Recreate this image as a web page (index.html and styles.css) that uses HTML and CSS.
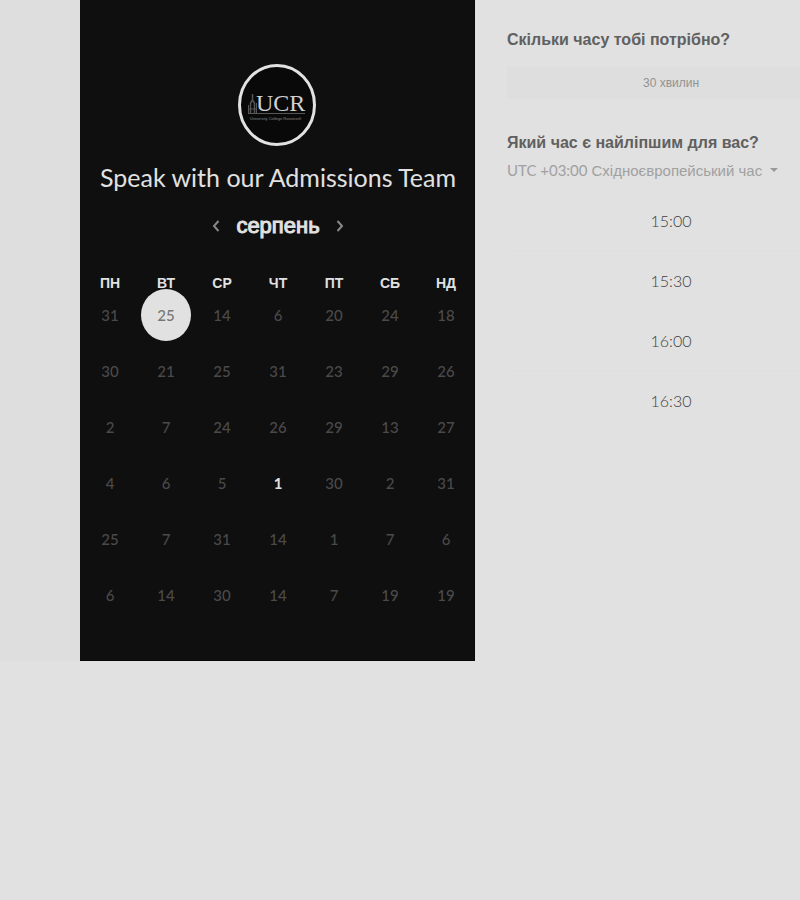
FILE: index.html
```html
<!DOCTYPE html>
<html lang="uk">
<head>
<meta charset="utf-8">
<meta name="viewport" content="width=device-width, initial-scale=1">
<title>Speak with our Admissions Team</title>
<link rel="stylesheet" href="styles.css">
</head>
<body>
<main class="booking">
  <section class="calendar">
    <svg class="logo" viewBox="0 0 80 82" role="img" aria-label="UCR">
      <ellipse cx="39" cy="41" rx="37.500" ry="39.500" fill="#090909" stroke="#e2e2e2" stroke-width="3"/>
      <g fill="none" stroke="#555">
        <path d="M12.500 50V39l2-3 2 3v11M14.500 36v-6" stroke-width="1.500"/>
        <path d="M10.500 50V41M18.500 50V39M10 45h9"/>
      </g>
      <text class="logo-name" x="18" y="47">UCR</text>
      <path d="M11 49.500h56" stroke="#555"/>
      <text class="logo-sub" x="12" y="56">University College Roosevelt</text>
    </svg>
    <h1 class="title">Speak with our Admissions Team</h1>
    <div class="month">
      <button class="arrow" type="button" aria-label="Попередній місяць"><svg viewBox="0 0 8 12"><path d="M6.500 1 2 6l4.500 5"/></svg></button>
      <h2 class="month-name">серпень</h2>
      <button class="arrow" type="button" aria-label="Наступний місяць"><svg viewBox="0 0 8 12"><path d="M1.500 1 6 6l-4.500 5"/></svg></button>
    </div>
    <table class="days">
      <thead><tr><th>ПН</th><th>ВТ</th><th>СР</th><th>ЧТ</th><th>ПТ</th><th>СБ</th><th>НД</th></tr></thead>
      <tbody>
        <tr><td>31</td><td><button class="day selected" type="button">25</button></td><td>14</td><td>6</td><td>20</td><td>24</td><td>18</td></tr>
        <tr><td>30</td><td>21</td><td>25</td><td>31</td><td>23</td><td>29</td><td>26</td></tr>
        <tr><td>2</td><td>7</td><td>24</td><td>26</td><td>29</td><td>13</td><td>27</td></tr>
        <tr><td>4</td><td>6</td><td>5</td><td><button class="day open" type="button">1</button></td><td>30</td><td>2</td><td>31</td></tr>
        <tr><td>25</td><td>7</td><td>31</td><td>14</td><td>1</td><td>7</td><td>6</td></tr>
        <tr><td>6</td><td>14</td><td>30</td><td>14</td><td>7</td><td>19</td><td>19</td></tr>
      </tbody>
    </table>
  </section>
  <section class="options">
    <h2 class="question">Скільки часу тобі потрібно?</h2>
    <button class="duration" type="button">30 хвилин</button>
    <h2 class="question">Який час є найліпшим для вас?</h2>
    <button class="zone" type="button"><span class="offset">UTC +03:00</span> Східноєвропейський час<span class="caret"></span></button>
    <div class="times">
      <button class="time" type="button">15:00</button>
      <button class="time" type="button">15:30</button>
      <button class="time" type="button">16:00</button>
      <button class="time" type="button">16:30</button>
    </div>
  </section>
</main>
</body>
</html>
```
FILE: styles.css
```css
* {
  box-sizing: border-box;
}

body {
  margin: 0;
  background: #e1e1e1;
  font-family: "Liberation Sans", sans-serif;
  overflow-x: hidden;
}

button {
  border: 0;
  padding: 0;
  background: none;
  color: inherit;
  font: inherit;
  cursor: pointer;
}

h1,
h2 {
  margin: 0;
}

.booking {
  display: grid;
  grid-template-columns: 80px 395px 360px;
  background: linear-gradient(90deg, #dedede 80px, #e1e1e1 80px);
}

.calendar {
  grid-column: 2;
  display: flex;
  flex-direction: column;
  align-items: center;
  padding: 64px 0 37px 2px;
  background: #0f0f0f;
  border: solid #080808;
  border-width: 0 1px 1px 0;
  color: #e1e1e1;
}

.logo {
  width: 80px;
  height: 82px;
}

.logo-name {
  font: 24px "Liberation Serif", serif;
  fill: #d0d0d0;
}

.logo-sub {
  font: 4px "Liberation Sans", sans-serif;
  fill: #888;
}

.title {
  margin-top: 15px;
  font: 25px/32px Lato, sans-serif;
  white-space: nowrap;
}

.month {
  display: flex;
  align-items: center;
  gap: 16px;
  margin-top: 18px;
}

.month-name {
  font-size: 22px;
  font-weight: 400;
  line-height: 30px;
  -webkit-text-stroke: 1px;
}

.arrow {
  display: flex;
}

.arrow svg {
  width: 8px;
  height: 12px;
  fill: none;
  stroke: #888;
  stroke-width: 2;
}

.days {
  width: 100%;
  margin-top: 32px;
  border-collapse: collapse;
  table-layout: fixed;
  text-align: center;
}

.days th {
  height: 14px;
  padding: 0;
  font-size: 14px;
  line-height: 8px;
  vertical-align: bottom;
}

.days td {
  height: 56px;
  padding: 0;
  color: #4a4a4a;
  font: 500 15px/20px Lato, sans-serif;
}

.day {
  display: block;
  margin: auto;
}

.selected {
  position: relative;
  width: 50px;
  height: 52px;
  border-radius: 50%;
  background: #e1e1e1;
  color: #777;
}

.open {
  color: #e1e1e1;
  font-weight: 700;
}

.options {
  padding: 28px 0 0 32px;
}

.question {
  color: #606060;
  font-size: 16px;
  line-height: 24px;
}

.duration {
  display: block;
  width: 100%;
  height: 32px;
  margin: 15px 0 32px;
  background: #dedede;
  color: #929292;
  font: 12px "Liberation Sans", sans-serif;
}

.zone {
  display: flex;
  align-items: center;
  gap: 4px;
  height: 30px;
  color: #a0a0a0;
  font-size: 15px;
  white-space: nowrap;
}

.offset {
  font-family: Lato, sans-serif;
}

.caret {
  margin-left: 4px;
  border: 4px solid transparent;
  border-top-color: #999;
  border-bottom: 0;
}

.times {
  display: grid;
  margin-top: 5px;
}

.time {
  height: 60px;
  border-top: 1px solid #dfdfdf;
  color: #404040;
  font: 300 16px Lato, sans-serif;
}
```
